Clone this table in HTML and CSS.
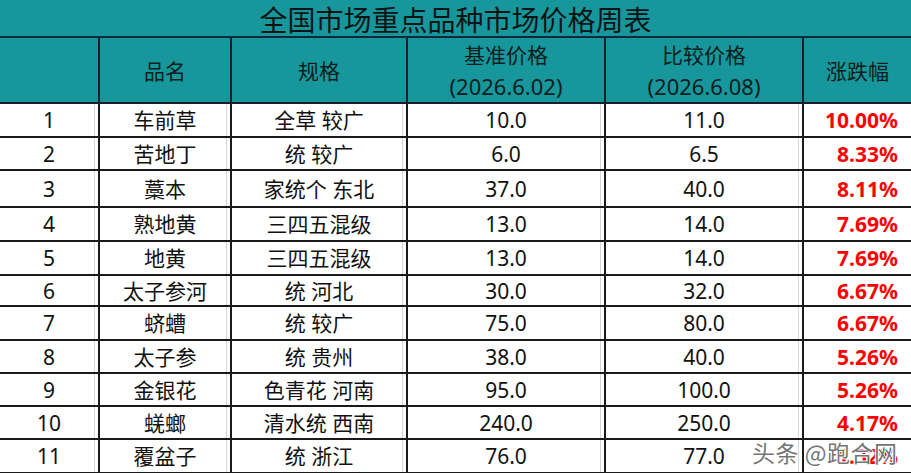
FILE: index.html
```html
<!DOCTYPE html>
<html lang="zh">
<head>
<meta charset="utf-8">
<title>全国市场重点品种市场价格周表</title>
<link rel="stylesheet" href="styles.css">
</head>
<body>
<div class="sheet">
  <div class="table">
    <div class="title">全国市场重点品种市场价格周表</div>
    <div class="hd"></div>
    <div class="hd">品名</div>
    <div class="hd">规格</div>
    <div class="hd two"><span>基准价格</span><span class="date">(2026.6.02)</span></div>
    <div class="hd two"><span>比较价格</span><span class="date">(2026.6.08)</span></div>
    <div class="hd last">涨跌幅</div>

    <div class="c">1</div><div class="c">车前草</div><div class="c">全草 较广</div><div class="c">10.0</div><div class="c">11.0</div><div class="c pct">10.00%</div>
    <div class="c">2</div><div class="c">苦地丁</div><div class="c">统 较广</div><div class="c">6.0</div><div class="c">6.5</div><div class="c pct">8.33%</div>
    <div class="c">3</div><div class="c">藁本</div><div class="c">家统个 东北</div><div class="c">37.0</div><div class="c">40.0</div><div class="c pct">8.11%</div>
    <div class="c">4</div><div class="c">熟地黄</div><div class="c">三四五混级</div><div class="c">13.0</div><div class="c">14.0</div><div class="c pct">7.69%</div>
    <div class="c">5</div><div class="c">地黄</div><div class="c">三四五混级</div><div class="c">13.0</div><div class="c">14.0</div><div class="c pct">7.69%</div>
    <div class="c">6</div><div class="c">太子参河</div><div class="c">统 河北</div><div class="c">30.0</div><div class="c">32.0</div><div class="c pct">6.67%</div>
    <div class="c">7</div><div class="c">蛴螬</div><div class="c">统 较广</div><div class="c">75.0</div><div class="c">80.0</div><div class="c pct">6.67%</div>
    <div class="c">8</div><div class="c">太子参</div><div class="c">统 贵州</div><div class="c">38.0</div><div class="c">40.0</div><div class="c pct">5.26%</div>
    <div class="c">9</div><div class="c">金银花</div><div class="c">色青花 河南</div><div class="c">95.0</div><div class="c">100.0</div><div class="c pct">5.26%</div>
    <div class="c">10</div><div class="c">蜣螂</div><div class="c">清水统 西南</div><div class="c">240.0</div><div class="c">250.0</div><div class="c pct">4.17%</div>
    <div class="c">11</div><div class="c">覆盆子</div><div class="c">统 浙江</div><div class="c">76.0</div><div class="c">77.0</div><div class="c pct">1.32%</div>
  </div>
  <div class="watermark">头条 @跑合网</div>
</div>
</body>
</html>
```

FILE: styles.css
```css
* { box-sizing: border-box; }

html, body {
  margin: 0;
  padding: 0;
  background: #ffffff;
}

.sheet {
  position: relative;
  width: 911px;
  height: 473px;
  overflow: hidden;
  font-family: "Noto Sans", "Noto Sans CJK SC", sans-serif;
  color: #111;
}

.table {
  display: grid;
  grid-template-columns: 100px 132px 176px 198px 198px 107px;
  grid-template-rows: 38px 66px 34px 33px 37px 34px 34px 31px 34px 33px 33px 33px 34px;
}

.title {
  grid-column: 1 / -1;
  background: #17979c;
  border-bottom: 2px solid #0f2a3a;
  color: #0a1414;
  font-family: "Noto Sans CJK SC", sans-serif;
  font-size: 28px;
  line-height: 1;
  display: flex;
  align-items: center;
  justify-content: center;
  padding-top: 2px;
}

.hd {
  background: #17979c;
  color: #0b1c1c;
  font-family: "Noto Sans CJK SC", sans-serif;
  font-size: 21px;
  border-right: 2px solid #15202a;
  border-bottom: 2px solid #15202a;
  display: flex;
  align-items: center;
  justify-content: center;
}

.hd.two {
  flex-direction: column;
  gap: 8px;
  line-height: 1.1;
  padding-top: 2px;
}

.hd .date {
  font-family: "Noto Sans", sans-serif;
  font-size: 22px;
}

.hd.last { border-right: none; }

.c {
  background: #fff;
  border-right: 2px solid #1a1a1a;
  border-bottom: 2px solid #1a1a1a;
  box-shadow: inset -3px 0 0 #fff, inset -4px 0 0 #d6d6d6;
  font-size: 21px;
  display: flex;
  align-items: center;
  justify-content: center;
  line-height: 1;
  padding-top: 1px;
}

.c.pct {
  border-right: none;
  box-shadow: none;
  justify-content: flex-end;
  padding-right: 13px;
  color: #ff0000;
  font-weight: 700;
  font-size: 21px;
}

.watermark {
  position: absolute;
  left: 752px;
  top: 435px;
  font-family: "Noto Sans CJK SC", sans-serif;
  font-size: 23px;
  color: rgba(90, 90, 90, 0.85);
  letter-spacing: 0.5px;
  text-shadow: 1px 0 #fff, -1px 0 #fff, 0 1px #fff, 0 -1px #fff;
}
```
